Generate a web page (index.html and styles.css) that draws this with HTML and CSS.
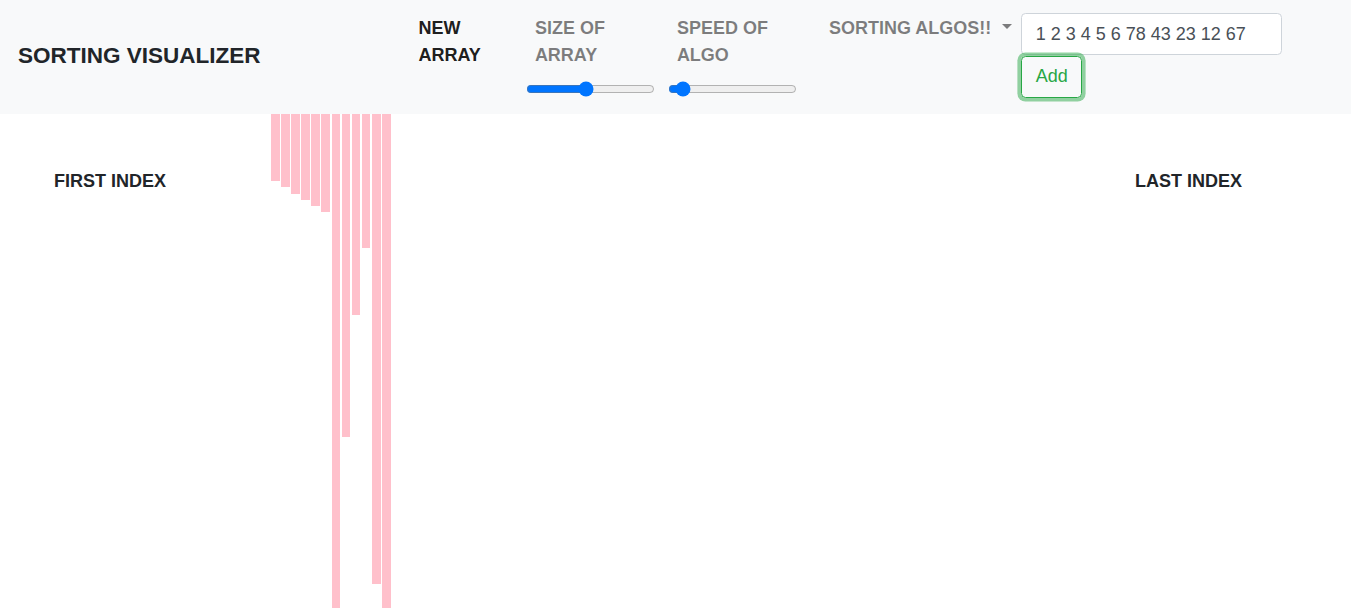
FILE: index.html
```html
<!DOCTYPE html>
<html lang="en">
<head>
<meta charset="utf-8">
<title>Sorting Visualizer</title>
<link rel="stylesheet" href="styles.css">
</head>
<body>
<nav class="navbar">
  <a class="brand">SORTING VISUALIZER</a>
  <div class="nav">
    <a class="nav-link active narrow">NEW ARRAY</a>
    <div class="slider-item">
      <span class="nav-link">SIZE OF ARRAY</span>
      <input class="range" type="range" min="0" max="100" value="46">
    </div>
    <div class="slider-item">
      <span class="nav-link">SPEED OF ALGO</span>
      <input class="range" type="range" min="0" max="100" value="6">
    </div>
    <a class="nav-link dropdown">SORTING ALGOS!!</a>
    <form class="add-form">
      <input class="form-control" type="text" value="1 2 3 4 5 6 78 43 23 12 67">
      <button class="btn-add" type="button">Add</button>
    </form>
  </div>
</nav>
<main class="stage">
  <div class="index-label">FIRST INDEX</div>
  <div class="bars">
    <div class="bar" style="height:67px"></div>
    <div class="bar" style="height:73px"></div>
    <div class="bar" style="height:80px"></div>
    <div class="bar" style="height:86px"></div>
    <div class="bar" style="height:92px"></div>
    <div class="bar" style="height:98px"></div>
    <div class="bar" style="height:537px"></div>
    <div class="bar" style="height:323px"></div>
    <div class="bar" style="height:201px"></div>
    <div class="bar" style="height:134px"></div>
    <div class="bar" style="height:470px"></div>
    <div class="bar" style="height:530px"></div>
  </div>
  <div class="index-label last">LAST INDEX</div>
</main>
</body>
</html>
```
FILE: styles.css
```css
html {
  font-size: 18px;
}
body {
  margin: 0;
  font-family: "Liberation Sans", Arial, sans-serif;
  font-size: 18px;
  line-height: 1.5;
  color: #212529;
  background: #fff;
  overflow: hidden;
}
.navbar {
  display: flex;
  align-items: center;
  height: 114px;
  box-sizing: border-box;
  padding: 0 16px;
  background: #f8f9fa;
}
.brand {
  margin-left: 2px;
  padding-bottom: 3px;
  font-size: 22.5px;
  font-weight: 700;
  color: #212529;
  line-height: 1.5;
}
.nav {
  display: flex;
  align-items: flex-start;
  align-self: flex-start;
  margin-left: 150px;
  padding-top: 9px;
}
.nav-link {
  display: block;
  padding: 6px 8px;
  font-weight: 700;
  color: rgba(0, 0, 0, 0.5);
  text-decoration: none;
}
.nav-link.active {
  color: rgba(0, 0, 0, 0.9);
}
.narrow {
  width: min-content;
  margin-right: 35px;
}
.slider-item {
  display: flex;
  flex-direction: column;
  width: 133px;
  margin-right: 9px;
}
.slider-item .nav-link {
  padding-left: 11px;
  padding-right: 5px;
}
.range {
  width: 129px;
  margin: 6px 2px 2px;
}
.slider-item:nth-child(3) {
  margin-right: 22px;
}
.dropdown {
  white-space: nowrap;
  padding-right: 9px;
}
.dropdown::after {
  content: "";
  display: inline-block;
  margin-left: 11px;
  vertical-align: 0.255em;
  border-top: 0.3em solid;
  border-right: 0.3em solid transparent;
  border-left: 0.3em solid transparent;
  border-bottom: 0;
}
.add-form {
  display: flex;
  flex-direction: column;
  align-items: flex-start;
  margin: 4px 0 0;
}
.form-control {
  width: 261px;
  height: 42px;
  box-sizing: border-box;
  padding: 6.75px 13.5px;
  font-family: inherit;
  font-size: 18px;
  line-height: 1.5;
  color: #495057;
  background: #fff;
  border: 1px solid #ced4da;
  border-radius: 4.5px;
  outline: none;
}
.btn-add {
  margin-top: 0.5px;
  padding: 6.75px 13.5px;
  font-family: inherit;
  font-size: 18px;
  line-height: 1.5;
  color: #28a745;
  background: transparent;
  border: 1px solid #28a745;
  border-radius: 4.5px;
  box-shadow: 0 0 0 3.6px rgba(40, 167, 69, 0.5);
}
.stage {
  display: flex;
  align-items: flex-start;
  height: 494px;
}
.index-label {
  margin: 54px 0 0 54px;
  font-weight: 700;
  line-height: 27px;
  white-space: nowrap;
}
.index-label.last {
  margin-left: auto;
  margin-right: 109px;
}
.bars {
  display: flex;
  align-items: flex-start;
  gap: 1.5px;
  margin-left: 105px;
}
.bar {
  width: 8.6px;
  background: pink;
}
```
